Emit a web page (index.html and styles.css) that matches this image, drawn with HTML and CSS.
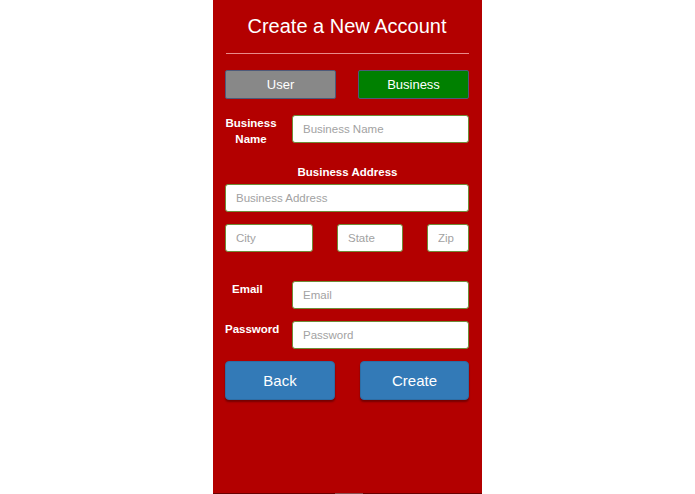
FILE: index.html
```html
<!DOCTYPE html>
<html>
<head>
<meta charset="utf-8">
<link rel="stylesheet" href="styles.css">
</head>
<body>
<div class="panel">
  <h1 class="title">Create a New Account</h1>
  <div class="rule"></div>
  <div class="toggle">
    <button class="tbtn user">User</button>
    <button class="tbtn business">Business</button>
  </div>
  <div class="row name-row">
    <label class="lbl lbl-name">Business<br>Name</label>
    <input class="field wide" placeholder="Business Name">
  </div>
  <div class="center-lbl">Business Address</div>
  <input class="field full" placeholder="Business Address">
  <div class="addr">
    <input class="field city" placeholder="City">
    <input class="field state" placeholder="State">
    <input class="field zip" placeholder="Zip">
  </div>
  <div class="row email-row">
    <label class="lbl lbl-email">Email</label>
    <input class="field wide" placeholder="Email">
  </div>
  <div class="row pass-row">
    <label class="lbl lbl-pass">Password</label>
    <input class="field wide" placeholder="Password">
  </div>
  <div class="actions">
    <button class="abtn">Back</button>
    <button class="abtn">Create</button>
  </div>
  <div class="bottom"><span class="notch"></span></div>
</div>
</body>
</html>
```
FILE: styles.css
```css
html, body {
  margin: 0;
  padding: 0;
  background: #fff;
  font-family: "Liberation Sans", Arial, sans-serif;
}
.panel {
  width: 269px;
  height: 494px;
  margin: 0 auto;
  background: #b30000;
  padding: 0 13px 0 12px;
  box-sizing: border-box;
  display: flex;
  flex-direction: column;
  position: relative;
}
.title {
  margin: 14px 0 0;
  font-size: 20px;
  font-weight: normal;
  color: #fff;
  text-align: center;
  line-height: 24px;
}
.rule {
  margin: 15px 0 0 1px;
  height: 1px;
  background: #e98a8a;
}
.toggle {
  display: flex;
  justify-content: space-between;
  margin-top: 16px;
}
.tbtn {
  width: 111px;
  height: 29px;
  border: 1px solid #4d5a7a;
  border-radius: 2px;
  color: #fff;
  font-family: inherit;
  font-size: 13px;
  padding: 0;
}
.user { background: #888888; }
.business { background: #008000; }
.row {
  display: flex;
  justify-content: space-between;
  align-items: flex-start;
}
.lbl {
  color: #fff;
  font-weight: bold;
  font-size: 11.5px;
  line-height: 16px;
}
.name-row { margin-top: 16px; }
.lbl-name { text-align: center; width: 52px; }
.field {
  height: 28px;
  box-sizing: border-box;
  border: 1px solid #6e8c38;
  border-radius: 3px;
  background: #fff;
  padding: 0 10px;
  font-family: inherit;
  font-size: 11.5px;
  color: #333;
  outline: none;
}
.field::placeholder { color: #a2a2a2; }
.wide { width: 177px; }
.center-lbl {
  color: #fff;
  font-weight: bold;
  font-size: 11.5px;
  text-align: center;
  margin-top: 18px;
  margin-left: 1px;
  line-height: 14px;
}
.full { width: 244px; margin-top: 5px; }
.addr {
  display: flex;
  justify-content: space-between;
  margin-top: 12px;
}
.city { width: 88px; }
.state { width: 66px; }
.zip { width: 42px; }
.email-row { margin-top: 29px; }
.lbl-email { margin-left: 7px; }
.pass-row { margin-top: 12px; }
.actions {
  display: flex;
  justify-content: space-between;
  margin-top: 12px;
}
.abtn {
  width: 110px;
  height: 39px;
  background: #337ab7;
  border: 1px solid #2e6da4;
  border-radius: 4px;
  box-shadow: 0 2px 2px rgba(0,0,0,0.35);
  color: #fff;
  font-family: inherit;
  font-size: 15px;
  padding: 0;
}
.abtn + .abtn { width: 109px; }
.bottom {
  position: absolute;
  left: 0;
  right: 0;
  bottom: 0;
  height: 1px;
  background: #6a0000;
}
.notch {
  position: absolute;
  left: 122px;
  width: 28px;
  height: 1px;
  background: #8a5050;
}
```
